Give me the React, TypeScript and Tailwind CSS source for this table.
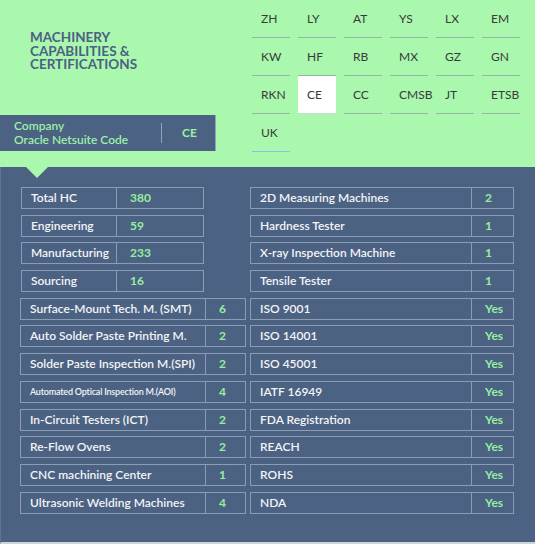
import React from 'react'

const codes = [
  'ZH', 'LY', 'AT', 'YS', 'LX', 'EM',
  'KW', 'HF', 'RB', 'MX', 'GZ', 'GN',
  'RKN', 'CE', 'CC', 'CMSB', 'JT', 'ETSB',
  'UK',
]

const headcount = [
  ['Total HC', '380'],
  ['Engineering', '59'],
  ['Manufacturing', '233'],
  ['Sourcing', '16'],
]

const machines = [
  ['Surface-Mount Tech. M. (SMT)', '6'],
  ['Auto Solder Paste Printing M.', '2'],
  ['Solder Paste Inspection M.(SPI)', '2'],
  ['Automated Optical Inspection M.(AOI)', '4'],
  ['In-Circuit Testers  (ICT)', '2'],
  ['Re-Flow Ovens', '2'],
  ['CNC machining Center', '1'],
  ['Ultrasonic Welding Machines', '4'],
]

const right = [
  ['2D Measuring Machines', '2'],
  ['Hardness Tester', '1'],
  ['X-ray Inspection Machine', '1'],
  ['Tensile Tester', '1'],
  ['ISO 9001', 'Yes'],
  ['ISO 14001', 'Yes'],
  ['ISO 45001', 'Yes'],
  ['IATF 16949', 'Yes'],
  ['FDA Registration', 'Yes'],
  ['REACH', 'Yes'],
  ['ROHS', 'Yes'],
  ['NDA', 'Yes'],
]

function Row({ label, value, labelW, small }: { label: string; value: string; labelW: string; small?: boolean }) {
  return (
    <div className="flex h-[22px] border border-[#8c9cb6] items-stretch">
      <div className={`${labelW} flex items-center pl-[9px] text-[#f3f4f6] whitespace-nowrap ${small ? 'text-[9px] tracking-[-0.2px]' : 'text-[12px]'}`}>
        {label}
      </div>
      <div className="flex-1 flex items-center pl-[13px] border-l border-[#8c9cb6] text-[#96ee9f] text-[12px] font-bold">
        {value}
      </div>
    </div>
  )
}

export default function App() {
  return (
    <div className="relative w-[535px] h-[544px] bg-[#aaf7ae] flex flex-col font-['Lato',sans-serif] font-semibold overflow-hidden">
      <div className="h-[167px] flex">
        <div className="w-[252px] flex flex-col">
          <h1 className="pt-[31px] pl-[30px] text-[13.5px] leading-[13.5px] font-bold text-[#4b6183] uppercase">
            Machinery
            <br />
            Capabilities &amp;
            <br />
            Certifications
          </h1>
          <div className="mt-auto mb-[16px] w-[216px] h-[36px] bg-[#4b6283] border-r border-[#8fa3c0] flex items-center">
            <div className="w-[161px] pl-[14px] text-[12px] leading-[14px] text-[#9ff0a6]">
              Company
              <br />
              Oracle Netsuite Code
            </div>
            <div className="w-px h-[20px] bg-[#8fa3c0]" />
            <div className="flex-1 pl-[20px] text-[12px] font-bold text-[#9ff0a6]">CE</div>
          </div>
        </div>
        <div className="grid grid-cols-[repeat(6,38px)] auto-rows-[38px] gap-x-[8px] content-start">
          {codes.map((c) => (
            <div
              key={c}
              className={`h-[38px] flex items-center pl-[9px] pt-[1px] text-[12px] font-normal text-[#3a3a3a] border-b whitespace-nowrap ${
                c === 'CE' ? 'bg-white border-[#c9ddd0]' : c === 'UK' ? 'border-[#8dc0df]' : 'border-[#93b7a4]'
              }`}
            >
              {c}
            </div>
          ))}
        </div>
      </div>

      <div className="absolute left-[26px] top-[167px] w-0 h-0 border-l-[11.5px] border-r-[11.5px] border-t-[11px] border-l-transparent border-r-transparent border-t-[#aaf7ae]" />

      <div className="flex-1 bg-[#4b6283] border-l border-[#5f7594] border-b-2 border-b-[#cdd4de] pt-[20px] pl-[19px] flex gap-[4px]">
        <div className="w-[226px] flex flex-col gap-[5.7px]">
          {headcount.map(([l, v]) => (
            <div key={l} className="w-[183px] ml-[1px]">
              <Row label={l} value={v} labelW="w-[94px]" />
            </div>
          ))}
          {machines.map(([l, v]) => (
            <Row key={l} label={l} value={v} labelW="w-[184px]" small={l.startsWith('Automated')} />
          ))}
        </div>
        <div className="w-[264px] flex flex-col gap-[5.7px]">
          {right.map(([l, v]) => (
            <Row key={l} label={l} value={v} labelW="w-[220px]" />
          ))}
        </div>
      </div>
    </div>
  )
}
